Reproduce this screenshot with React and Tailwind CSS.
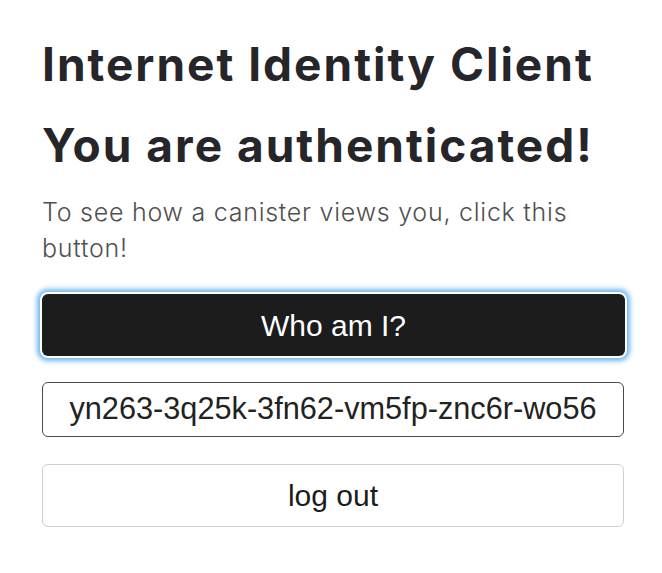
import React from "react";

export default function App() {
  return (
    <div className="min-h-[573px] bg-white pt-[36px] pl-[42px]">
      <div className="w-[583px]">
        <h1 className="font-['Inter',sans-serif] text-[46px] leading-[56px] font-bold text-[#25252a] tracking-[2px] whitespace-nowrap">
          Internet Identity Client
        </h1>
        <h2 className="mt-[25px] font-['Inter',sans-serif] text-[46px] leading-[56px] font-bold text-[#25252a] tracking-[2px] whitespace-nowrap">
          You are authenticated!
        </h2>
        <p className="mt-[21px] font-['Inter',sans-serif] text-[25px] leading-[36px] font-light text-[#505050] tracking-[0.75px]">
          To see how a canister views you, click this button!
        </p>
        <button className="mt-[28px] block w-[583px] h-[62px] rounded-[6px] bg-[#1c1c1c] text-white font-['Liberation_Sans',Arial,sans-serif] text-[30px] shadow-[0_0_0_2px_#ffffff,0_0_5px_5px_#6fb6ee]">
          Who am I?
        </button>
        <div className="mt-[26px] flex h-[55px] w-[582px] items-center justify-center overflow-hidden rounded-[6px] border-[1.5px] border-[#4a4a4a] font-['Liberation_Sans',Arial,sans-serif] text-[30.7px] text-[#222222] whitespace-nowrap">
          yn263-3q25k-3fn62-vm5fp-znc6r-wo56
        </div>
        <button className="mt-[27px] block w-[582px] h-[63px] rounded-[6px] border-[1.5px] border-[#cfcfcf] bg-white text-[#1c1c1c] font-['Liberation_Sans',Arial,sans-serif] text-[30px]">
          log out
        </button>
      </div>
    </div>
  );
}
